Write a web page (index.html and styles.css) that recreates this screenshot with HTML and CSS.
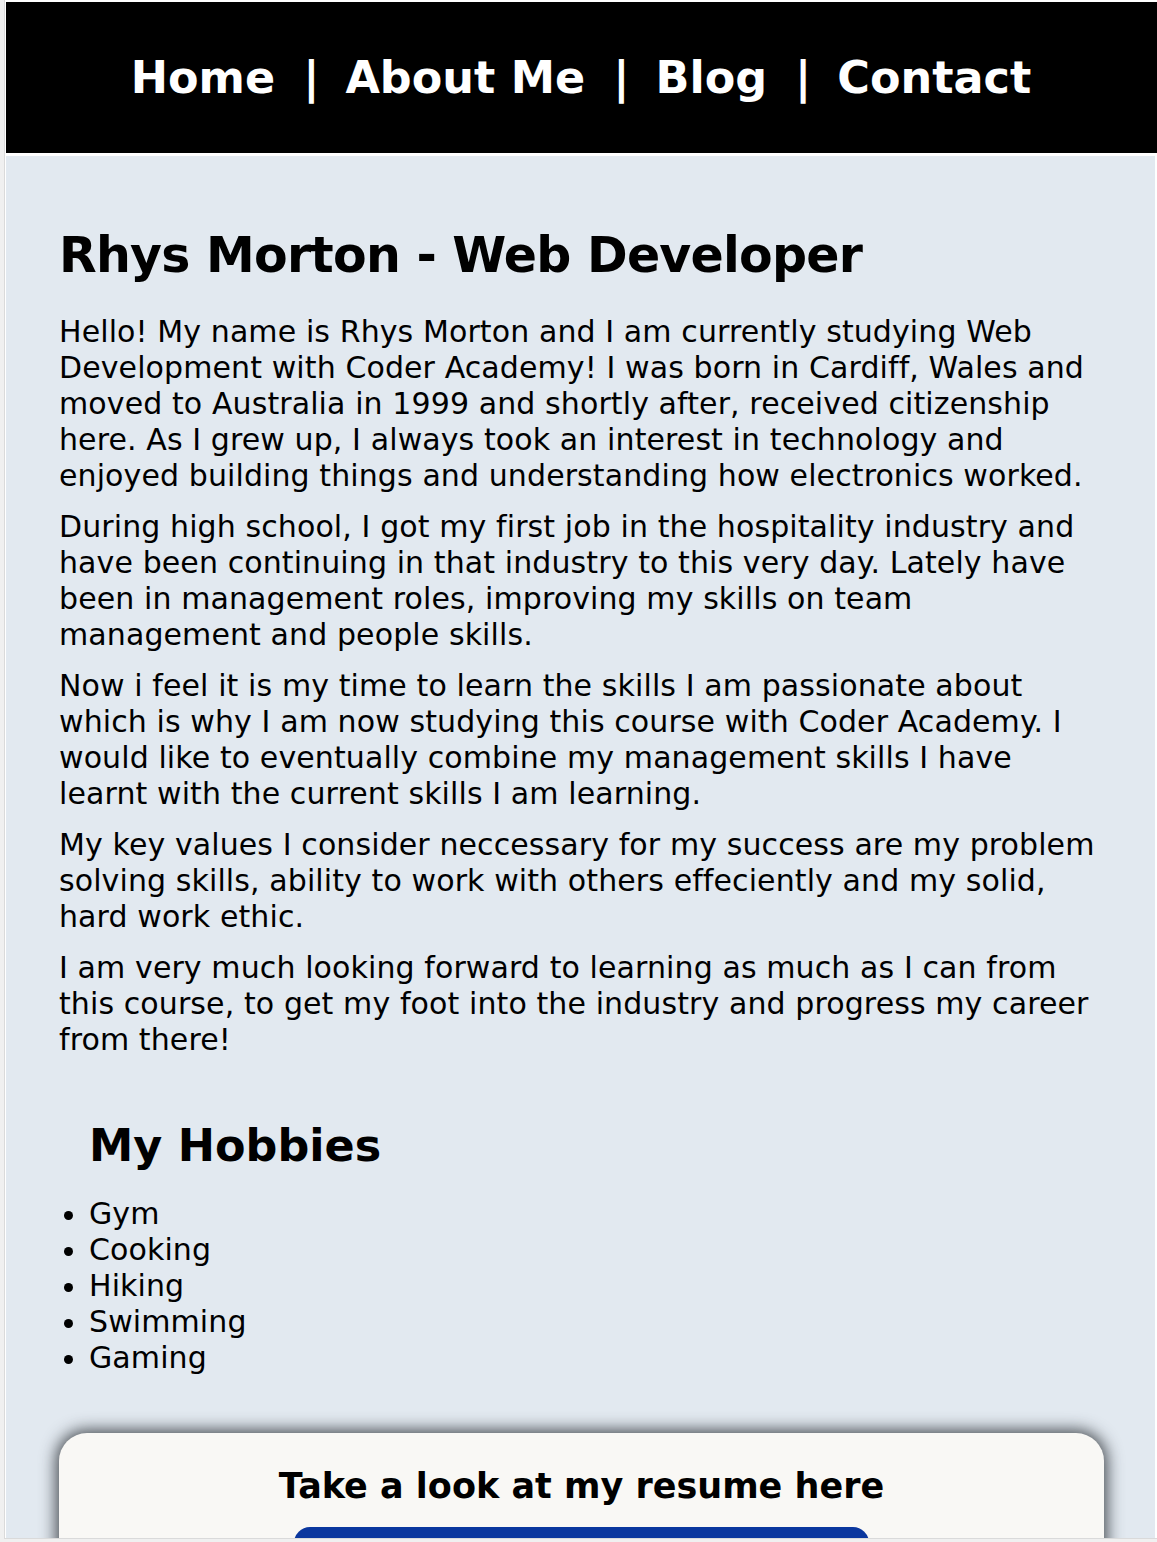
FILE: index.html
```html
<!DOCTYPE html>
<html lang="en">
<head>
<meta charset="utf-8">
<title>Rhys Morton - Web Developer</title>
<link rel="stylesheet" href="styles.css">
</head>
<body>
<div class="frame">
  <nav class="nav">
    <a class="nav-link" href="#">Home</a><span class="sep">|</span><a class="nav-link" href="#">About Me</a><span class="sep">|</span><a class="nav-link" href="#">Blog</a><span class="sep">|</span><a class="nav-link" href="#">Contact</a>
  </nav>
  <main class="main">
    <h1 class="title">Rhys Morton - Web Developer</h1>
    <p class="text">Hello! My name is Rhys Morton and I am currently studying Web Development with Coder Academy! I was born in Cardiff, Wales and moved to Australia in 1999 and shortly after, received citizenship here. As I grew up, I always took an interest in technology and enjoyed building things and understanding how electronics worked.</p>
    <p class="text">During high school, I got my first job in the hospitality industry and have been continuing in that industry to this very day. Lately have been in management roles, improving my skills on team management and people skills.</p>
    <p class="text">Now i feel it is my time to learn the skills I am passionate about which is why I am now studying this course with Coder Academy. I would like to eventually combine my management skills I have learnt with the current skills I am learning.</p>
    <p class="text">My key values I consider neccessary for my success are my problem solving skills, ability to work with others effeciently and my solid, hard work ethic.</p>
    <p class="text">I am very much looking forward to learning as much as I can from this course, to get my foot into the industry and progress my career from there!</p>
    <h2 class="subtitle">My Hobbies</h2>
    <ul class="hobbies">
      <li>Gym</li>
      <li>Cooking</li>
      <li>Hiking</li>
      <li>Swimming</li>
      <li>Gaming</li>
    </ul>
    <section class="card">
      <h3 class="card-title">Take a look at my resume here</h3>
      <a class="button" href="#">Resume</a>
    </section>
  </main>
</div>
</body>
</html>
```
FILE: styles.css
```css
html, body {
  margin: 0;
  padding: 0;
}
body {
  background: #f0f0f0;
  font-family: "DejaVu Sans", Verdana, sans-serif;
  color: #000;
}
.frame {
  margin-left: 4px;
  border-left: 1px solid #dadada;
  border-bottom: 1px solid #dadada;
  background: #ffffff;
  padding: 2px 0 1px 1px;
  height: 1535px;
  overflow: hidden;
  box-sizing: content-box;
}
.nav {
  background: #000;
  height: 151px;
  display: flex;
  align-items: center;
  justify-content: center;
  font-weight: bold;
  font-size: 44.5px;
  color: #fff;
  padding-right: 1px;
}
.nav-link {
  color: #fff;
  text-decoration: none;
}
.sep {
  margin: 0 26px 0 28px;
}
.main {
  margin-top: 3px;
  margin-right: 2px;
  background: #e2e9f0;
  padding: 70px 51px 40px 53px;
  min-height: 1400px;
}
.title {
  margin: 0 0 28px;
  font-size: 49px;
  line-height: 60px;
  letter-spacing: -0.75px;
  font-weight: bold;
}
.text {
  margin: 0 0 15px;
  font-size: 30px;
  line-height: 36px;
  letter-spacing: 0.1px;
}
.subtitle {
  margin: 62px 0 24px;
  padding-left: 30px;
  font-size: 44.5px;
  line-height: 52px;
  font-weight: bold;
}
.hobbies {
  margin: 0;
  padding-left: 30px;
  font-size: 30px;
  line-height: 36px;
  letter-spacing: 0.1px;
}
.card {
  margin-top: 57px;
  background: #f9f8f5;
  border-radius: 28px;
  box-shadow: 0 0 16px 3px rgba(30, 35, 40, 0.8);
  padding: 32px 20px 30px;
  display: flex;
  flex-direction: column;
  align-items: center;
}
.card-title {
  margin: 0 0 20px;
  font-size: 35px;
  line-height: 42px;
  font-weight: bold;
}
.button {
  display: block;
  width: 575px;
  height: 90px;
  background: #0b379e;
  border-radius: 16px;
  color: #fff;
  text-decoration: none;
  font-size: 30px;
  font-weight: bold;
  text-align: center;
  line-height: 30px;
  padding-top: 40px;
  box-sizing: border-box;
}
```
